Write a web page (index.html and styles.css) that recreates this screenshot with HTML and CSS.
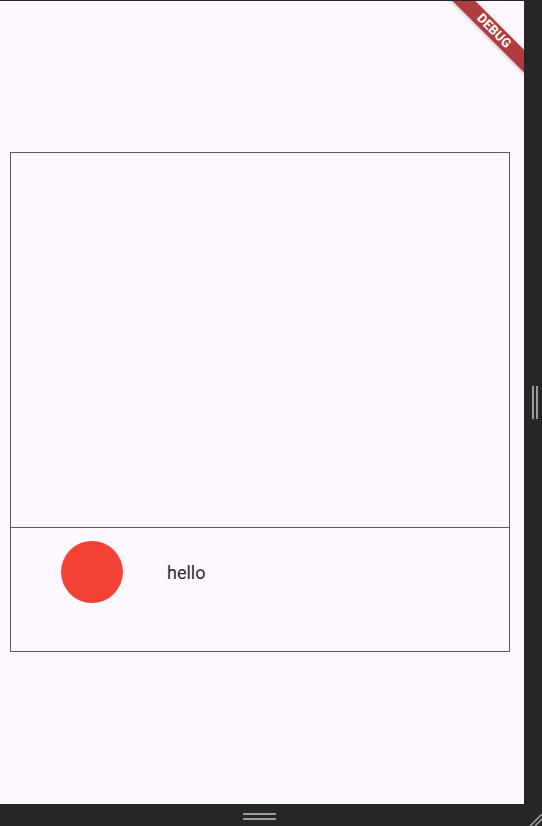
FILE: index.html
```html
<!DOCTYPE html>
<html>
<head>
<meta charset="utf-8">
<link rel="stylesheet" href="styles.css">
</head>
<body>
<div class="window">
  <div class="main">
    <div class="app">
      <div class="box">
        <div class="box-top"></div>
        <div class="box-bottom">
          <div class="dot"></div>
          <span class="label">hello</span>
        </div>
      </div>
      <div class="banner">DEBUG</div>
    </div>
    <div class="side">
      <div class="vgrip"><span></span><span></span></div>
    </div>
  </div>
  <div class="foot">
    <div class="hgrip"><span></span><span></span></div>
    <svg class="corner" width="14" height="14" viewBox="0 0 14 14">
      <line x1="2" y1="14" x2="14" y2="2" stroke="#9a9a9a" stroke-width="1.6"/>
      <line x1="7" y1="14" x2="14" y2="7" stroke="#9a9a9a" stroke-width="1.6"/>
    </svg>
  </div>
</div>
</body>
</html>
```
FILE: styles.css
```css
html, body {
  margin: 0;
  padding: 0;
}
body {
  background: #252628;
  width: 542px;
  height: 826px;
  overflow: hidden;
  font-family: Roboto, "Liberation Sans", sans-serif;
}
.window {
  display: flex;
  flex-direction: column;
  width: 542px;
  height: 826px;
}
.main {
  display: flex;
  height: 804px;
}
.app {
  position: relative;
  margin-top: 1px;
  width: 524px;
  height: 803px;
  background: #fef7ff;
  overflow: hidden;
  box-sizing: border-box;
  padding: 151px 0 0 10px;
}
.box {
  width: 500px;
  height: 500px;
  box-sizing: border-box;
  border: 1px solid #5f5a63;
  display: flex;
  flex-direction: column;
}
.box-top {
  height: 374px;
  border-bottom: 1px solid #5f5a63;
}
.box-bottom {
  height: 123px;
  box-sizing: border-box;
  padding: 13px 0 0 50px;
  display: flex;
  align-items: flex-start;
}
.dot {
  width: 62px;
  height: 62px;
  border-radius: 50%;
  background: #f44336;
  flex: none;
}
.label {
  margin-left: 44px;
  margin-top: 20px;
  font-size: 18px;
  line-height: 24px;
  color: #2a2830;
}
.banner {
  position: absolute;
  left: 414px;
  top: 22px;
  width: 160px;
  height: 16px;
  line-height: 16px;
  transform: rotate(45deg);
  background: #b03c3e;
  box-shadow: 0 1px 4px rgba(0, 0, 0, 0.25);
  color: #ffffff;
  font-weight: bold;
  font-size: 13px;
  text-align: center;
  letter-spacing: 0.2px;
}
.side {
  width: 18px;
  display: flex;
  align-items: center;
  justify-content: center;
}
.vgrip {
  display: flex;
  gap: 2px;
  margin-left: 3px;
}
.vgrip span {
  display: block;
  width: 2px;
  height: 33px;
  background: #9a9a9a;
}
.foot {
  position: relative;
  height: 22px;
  display: flex;
}
.hgrip {
  display: flex;
  flex-direction: column;
  gap: 3px;
  margin-top: 9px;
  margin-left: 243px;
}
.hgrip span {
  display: block;
  width: 33px;
  height: 2px;
  background: #9a9a9a;
}
.corner {
  position: absolute;
  right: 0;
  bottom: 0;
}
```
